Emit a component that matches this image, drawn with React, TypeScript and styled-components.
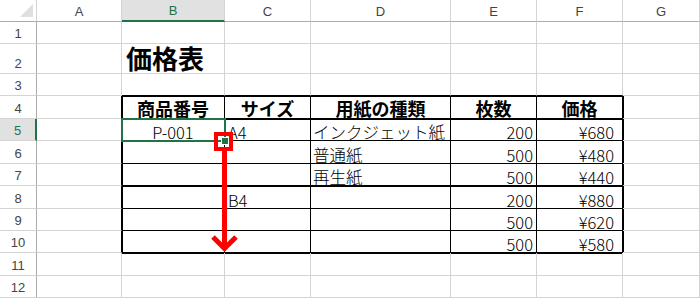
import React from "react";
import styled, { createGlobalStyle } from "styled-components";

const GRID = "#d4d4d4";
const HEAD_LINE = "#ababab";
const GREEN = "#217346";
const INK = "#000";

const COLS = ["A", "B", "C", "D", "E", "F", "G"];
const COL_WIDTHS = [37, 85, 103, 86, 140, 86, 86, 77];
const ROW_HEIGHTS = [22, 22, 30, 22, 23, 22, 23, 22, 23, 22, 22, 23, 22];

type Align = "left" | "center" | "right";
type Kind = "title" | "head" | "data";

interface Entry {
  text: string;
  kind: Kind;
}

// column settings for the price table (index 1 = A)
const COL_ALIGN: Record<number, { align: Align; padL: number; padR: number }> = {
  2: { align: "center", padL: 0, padR: 0 },
  3: { align: "left", padL: 3, padR: 0 },
  4: { align: "left", padL: 2, padR: 0 },
  5: { align: "right", padL: 0, padR: 3 },
  6: { align: "right", padL: 0, padR: 8 },
};

const SHEET: Record<number, Record<number, Entry>> = {
  2: { 2: { text: "価格表", kind: "title" } },
  4: {
    2: { text: "商品番号", kind: "head" },
    3: { text: "サイズ", kind: "head" },
    4: { text: "用紙の種類", kind: "head" },
    5: { text: "枚数", kind: "head" },
    6: { text: "価格", kind: "head" },
  },
  5: {
    2: { text: "P-001", kind: "data" },
    3: { text: "A4", kind: "data" },
    4: { text: "インクジェット紙", kind: "data" },
    5: { text: "200", kind: "data" },
    6: { text: "¥680", kind: "data" },
  },
  6: {
    4: { text: "普通紙", kind: "data" },
    5: { text: "500", kind: "data" },
    6: { text: "¥480", kind: "data" },
  },
  7: {
    4: { text: "再生紙", kind: "data" },
    5: { text: "500", kind: "data" },
    6: { text: "¥440", kind: "data" },
  },
  8: {
    3: { text: "B4", kind: "data" },
    5: { text: "200", kind: "data" },
    6: { text: "¥880", kind: "data" },
  },
  9: {
    5: { text: "500", kind: "data" },
    6: { text: "¥620", kind: "data" },
  },
  10: {
    5: { text: "500", kind: "data" },
    6: { text: "¥580", kind: "data" },
  },
};

const GlobalStyle = createGlobalStyle`
  html, body {
    margin: 0;
    padding: 0;
    background: #fff;
  }
  body {
    font-family: "Noto Sans CJK JP", sans-serif;
    overflow: hidden;
  }
`;

const Sheet = styled.div`
  position: relative;
  display: grid;
  grid-template-columns: ${COL_WIDTHS.map(w => `${w}px`).join(" ")};
  grid-template-rows: ${ROW_HEIGHTS.map(h => `${h}px`).join(" ")};
  width: 700px;
  height: 298px;
  overflow: hidden;
`;

const Corner = styled.div`
  box-sizing: border-box;
  display: flex;
  align-items: flex-end;
  justify-content: flex-end;
  padding: 0 3px 4px 0;
  border-right: 1px solid ${GRID};
  border-bottom: 1px solid ${HEAD_LINE};
`;

const ColHeader = styled.div<{ $selected: boolean }>`
  box-sizing: border-box;
  display: flex;
  align-items: center;
  justify-content: center;
  padding-top: 1px;
  background: ${p => (p.$selected ? "#e1e1e1" : "#fff")};
  color: ${p => (p.$selected ? GREEN : "#444")};
  border-right: 1px solid ${GRID};
  border-bottom: ${p => (p.$selected ? `2px solid ${GREEN}` : `1px solid ${HEAD_LINE}`)};
  font-family: "Liberation Sans", Arial, sans-serif;
  font-size: 13px;
`;

const RowHeader = styled.div<{ $selected: boolean }>`
  box-sizing: border-box;
  display: flex;
  align-items: flex-end;
  justify-content: center;
  padding-bottom: 3px;
  background: ${p => (p.$selected ? "#e1e1e1" : "#fff")};
  color: ${p => (p.$selected ? GREEN : "#444")};
  border-right: ${p => (p.$selected ? `2px solid ${GREEN}` : `1px solid ${HEAD_LINE}`)};
  border-bottom: 1px solid ${GRID};
  font-family: "Liberation Sans", Arial, sans-serif;
  font-size: 13px;
  line-height: 1;
`;

const Cell = styled.div<{
  $right: string;
  $bottom: string;
  $shadow: string;
  $align: Align;
  $padL: number;
  $padR: number;
}>`
  position: relative;
  box-sizing: border-box;
  display: flex;
  align-items: flex-end;
  justify-content: ${p =>
    p.$align === "left" ? "flex-start" : p.$align === "right" ? "flex-end" : "center"};
  padding: 0 ${p => p.$padR}px 0 ${p => p.$padL}px;
  border-right: 1px solid ${p => p.$right};
  border-bottom: 1px solid ${p => p.$bottom};
  box-shadow: ${p => p.$shadow};
  white-space: nowrap;
  min-width: 0;
`;

const Title = styled.span`
  font-size: 26px;
  font-weight: 700;
  line-height: 1;
  padding: 0 0 2px 4px;
  color: #000;
`;

const HeadText = styled.span`
  font-size: 18px;
  font-weight: 700;
  line-height: 1;
  padding-bottom: 1px;
  color: #000;
`;

const DataText = styled.span`
  font-size: 16.5px;
  font-weight: 300;
  line-height: 1;
  color: #000;
`;

const Selection = styled.div`
  position: absolute;
  left: -1px;
  top: -1px;
  right: -2px;
  bottom: -2px;
  border: 2px solid ${GREEN};
  box-sizing: border-box;
  pointer-events: none;
  z-index: 2;
`;

const FillHandle = styled.div`
  position: absolute;
  right: -5px;
  bottom: -5px;
  width: 8px;
  height: 8px;
  box-sizing: border-box;
  background: ${GREEN};
  border: 1px solid #fff;
`;

const Annotation = styled.svg`
  position: absolute;
  left: 0;
  top: 0;
  pointer-events: none;
  z-index: 3;
`;

const TEXT_BY_KIND = { title: Title, head: HeadText, data: DataText };

function cellEdges(r: number, c: number) {
  const tableRow = r >= 4 && r <= 10;
  const tableCol = c >= 2 && c <= 6;
  const bottomInk = tableCol && r >= 3 && r <= 10;
  const rightInk = tableRow && c >= 1 && c <= 6;
  const shadows: string[] = [];
  if (tableCol && [4, 5, 8, 11].includes(r)) shadows.push(`inset 0 1px 0 ${INK}`);
  if (tableRow && (c === 2 || c === 7)) shadows.push(`inset 1px 0 0 ${INK}`);
  return {
    bottom: bottomInk ? INK : GRID,
    right: rightInk ? INK : GRID,
    shadow: shadows.length ? shadows.join(", ") : "none",
  };
}

const SheetCell: React.FC<{ r: number; c: number }> = ({ r, c }) => {
  const entry = SHEET[r]?.[c];
  const edges = cellEdges(r, c);
  const colCfg = COL_ALIGN[c] ?? { align: "left" as Align, padL: 2, padR: 0 };
  const align: Align = entry?.kind === "head" ? "center" : entry?.kind === "title" ? "left" : colCfg.align;
  const Text = entry ? TEXT_BY_KIND[entry.kind] : null;
  const selected = r === 5 && c === 2;

  return (
    <Cell
      $right={edges.right}
      $bottom={edges.bottom}
      $shadow={edges.shadow}
      $align={align}
      $padL={entry?.kind === "data" ? colCfg.padL : 0}
      $padR={entry?.kind === "data" ? colCfg.padR : 0}
    >
      {Text && entry && <Text>{entry.text}</Text>}
      {selected && (
        <Selection>
          <FillHandle />
        </Selection>
      )}
    </Cell>
  );
};

const App: React.FC = () => {
  const rows = ROW_HEIGHTS.map((_, r) => r);

  return (
    <>
      <GlobalStyle />
      <Sheet>
        {rows.map(r =>
          COL_WIDTHS.map((_, c) => {
            if (r === 0 && c === 0)
              return (
                <Corner key="corner">
                  <svg width="13" height="13" viewBox="0 0 13 13">
                    <polygon points="13,0 13,13 0,13" fill="#dfdfdf" />
                  </svg>
                </Corner>
              );
            if (r === 0)
              return (
                <ColHeader key={`h${c}`} $selected={c === 2}>
                  {COLS[c - 1]}
                </ColHeader>
              );
            if (c === 0)
              return (
                <RowHeader key={`r${r}`} $selected={r === 5}>
                  {r}
                </RowHeader>
              );
            return <SheetCell key={`${r}-${c}`} r={r} c={c} />;
          })
        )}
        <Annotation width="700" height="298" viewBox="0 0 700 298">
          <rect
            x="216"
            y="134"
            width="15"
            height="15"
            fill="none"
            stroke="#ff0000"
            strokeWidth="4"
            shapeRendering="crispEdges"
          />
          <line
            x1="224.5"
            y1="151"
            x2="224.5"
            y2="246"
            stroke="#ff0000"
            strokeWidth="5"
            shapeRendering="crispEdges"
          />
          <polyline
            points="213,237 224.5,248.5 236,237"
            fill="none"
            stroke="#ff0000"
            strokeWidth="5"
            strokeLinejoin="miter"
          />
        </Annotation>
      </Sheet>
    </>
  );
};

export default App;
